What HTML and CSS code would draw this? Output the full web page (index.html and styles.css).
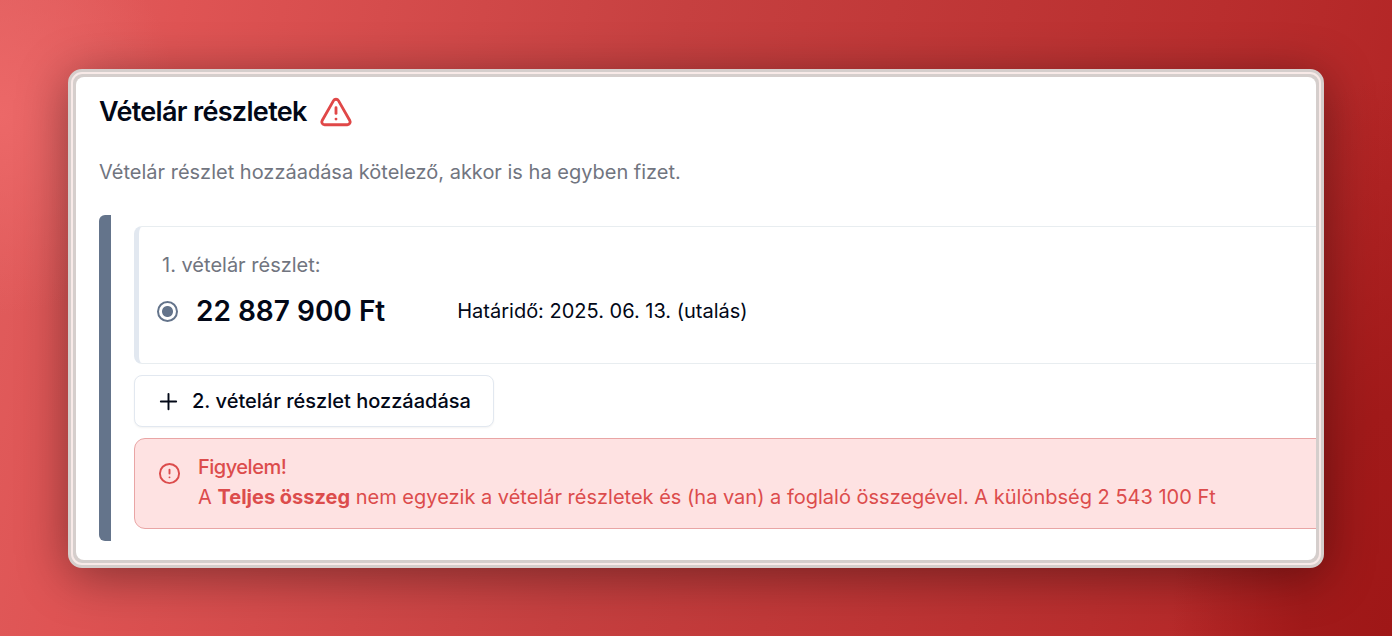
FILE: index.html
```html
<!DOCTYPE html>
<html lang="hu">
<head>
  <meta charset="UTF-8">
  <meta name="viewport" content="width=device-width, initial-scale=1">
  <title>Vételár részletek</title>
  <link rel="stylesheet" href="styles.css">
</head>
<body>
  <main class="window">
    <div class="window-ring">
      <div class="content">
        <header class="heading">
          <h1>Vételár részletek</h1>
          <svg class="icon-warning" viewBox="0 0 24 24" aria-hidden="true">
            <path d="m21.73 18-8-14a2 2 0 0 0-3.48 0l-8 14A2 2 0 0 0 4 21h16a2 2 0 0 0 1.73-3Z"/>
            <path d="M12 9v4"/>
            <path d="M12 17h.01"/>
          </svg>
        </header>
        <p class="intro">Vételár részlet hozzáadása kötelező, akkor is ha egyben fizet.</p>

        <section class="installments">
          <div class="card">
            <label class="card-label" for="installment1">1. vételár részlet:</label>
            <div class="card-row">
              <input type="radio" id="installment1" name="installment" checked>
              <strong class="amount">22 887 900 Ft</strong>
              <span class="deadline">Határidő: 2025. 06. 13. (utalás)</span>
            </div>
          </div>

          <button type="button" class="add-button">
            <svg class="icon-plus" viewBox="0 0 24 24" aria-hidden="true">
              <path d="M4 12h16M12 4v16"/>
            </svg>
            2. vételár részlet hozzáadása
          </button>

          <div class="alert" role="alert">
            <svg class="icon-alert" viewBox="0 0 24 24" aria-hidden="true">
              <circle cx="12" cy="12" r="10"/>
              <path d="M12 8v4M12 16h.01"/>
            </svg>
            <div>
              <h2>Figyelem!</h2>
              <p>A <strong>Teljes összeg</strong> nem egyezik a vételár részletek és (ha van) a foglaló összegével. A különbség 2 543 100 Ft</p>
            </div>
          </div>
        </section>
      </div>
    </div>
  </main>
</body>
</html>
```

FILE: styles.css
```css
* { box-sizing: border-box; }

body {
  margin: 0;
  min-height: 100vh;
  padding: 69px 68px 68px;
  font-family: Inter, "Liberation Sans", sans-serif;
  font-size: 20px;
  line-height: 30px;
  color: #020817;
  background:
    radial-gradient(ellipse 180px 200px at 0 18%, #ec6868 0%, rgba(236, 104, 104, 0) 100%),
    radial-gradient(ellipse 220px 560px at 100% 100%, #9f1717 0%, #a11a1a 40%, rgba(161, 26, 26, 0) 100%),
    linear-gradient(102deg, #e05e5e 0%, #df5454 12%, #c64040 45%, #b92e2e 80%, #b02222 100%);
}

h1, h2, p { margin: 0; }

/* window frame: grey, light and grey rings */
.window {
  border: 3px solid #d5cecc;
  border-radius: 14px;
  background: #d5cecc;
  box-shadow: 0 8px 50px rgba(0, 0, 0, 0.4);
}
.window-ring {
  border: 2px solid #f8eae8;
  border-radius: 11px;
  padding: 3px;
}
.content {
  overflow: hidden;
  border-radius: 8px;
  padding: 16px 0 19px 23px;
  background: #fff;
}

.heading {
  display: flex;
  align-items: center;
  gap: 12px;
}
h1 {
  font-size: 27px;
  line-height: 38px;
  font-weight: 600;
  letter-spacing: -0.025em;
}

svg {
  flex: none;
  fill: none;
  stroke: currentColor;
  stroke-width: 2;
  stroke-linecap: round;
  stroke-linejoin: round;
}
.icon-warning { width: 34px; height: 34px; color: #e04848; }
.icon-plus { width: 23px; height: 23px; }
.icon-alert { width: 23px; height: 23px; margin-top: 10px; }

.intro {
  margin: 26px 0 28px;
  color: #71757f;
}

/* the list runs on past the right edge of the window */
.installments {
  display: flex;
  flex-direction: column;
  gap: 11px;
  margin-right: -40px;
  padding: 11px 0 12px 23px;
  border-left: 12px solid #64748b;
  border-radius: 6px;
}

.card {
  padding: 23px 23px 34px 18px;
  border: 1px solid #e8edf0;
  border-left: 5px solid #e2e8f0;
  border-radius: 8px;
}
.card-label {
  display: block;
  padding-left: 5px;
  color: #71757f;
}
.card-row {
  display: flex;
  align-items: center;
  margin-top: 13px;
  line-height: 36px;
}
input[type="radio"] {
  appearance: none;
  width: 21px;
  height: 21px;
  margin: 0 18px 0 0;
  border: 2px solid #64748b;
  border-radius: 50%;
  background: radial-gradient(circle, #64748b 5px, #fff 6px);
}
.amount {
  font-size: 28px;
  font-weight: 600;
  margin-right: 72px;
}

.add-button {
  display: flex;
  align-items: center;
  align-self: flex-start;
  gap: 12px;
  padding: 10px 22px;
  border: 1px solid #e2e8f0;
  border-radius: 8px;
  background: #fff;
  color: inherit;
  font: inherit;
  font-weight: 500;
  box-shadow: 0 1px 2px rgba(0, 0, 0, 0.05);
}

.alert {
  display: flex;
  gap: 17px;
  padding: 13px 23px 16px;
  border: 1px solid #e9a5a5;
  border-radius: 11px;
  background: #fee2e2;
  color: #dc4c4c;
}
.alert h2 {
  font-size: 20px;
  line-height: 30px;
  font-weight: 500;
  letter-spacing: -0.025em;
}
.alert p { white-space: nowrap; }
.alert strong { font-weight: 700; }
```
